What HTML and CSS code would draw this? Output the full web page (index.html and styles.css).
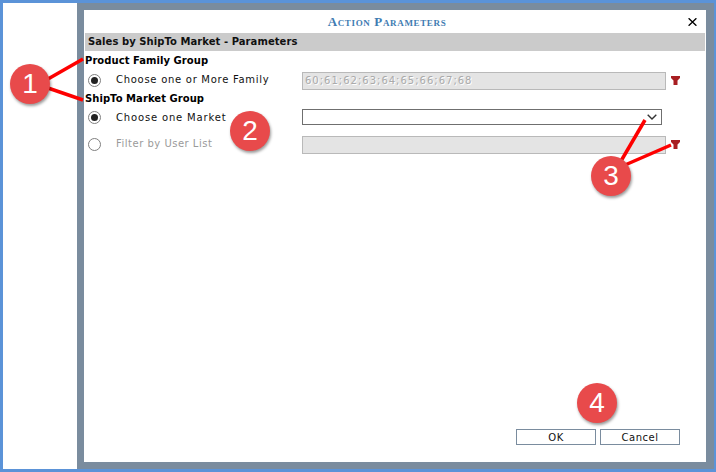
FILE: index.html
```html
<!DOCTYPE html>
<html lang="en">
<head>
    <meta charset="UTF-8" />
    <title>Action Parameters</title>
    <link rel="stylesheet" href="styles.css">
</head>
<body>
    <div class="frame">
        <div class="side"></div>
        <div class="backdrop">
            <div class="dialog">
                <div class="dialog-title">
                    <span class="title-text">Action Parameters</span>
                    <svg class="close" viewBox="0 0 9 8"><path d="M0.6 0.3L8.4 7.7M8.4 0.3L0.6 7.7" fill="none" stroke="#000" stroke-width="1.4"/></svg>
                </div>
                <div class="section-bar">Sales by ShipTo Market - Parameters</div>

                <div class="group-label">Product Family Group</div>
                <div class="row row-first">
                    <span class="radio checked"></span>
                    <span class="row-label">Choose one or More Family</span>
                    <div class="field disabled">60;61;62;63;64;65;66;67;68</div>
                    <svg class="filter" viewBox="0 0 9 9"><path d="M0 0H9V2L6.5 4.4V9H2.5V4.4L0 2Z" fill="#a81e22"/></svg>
                </div>

                <div class="group-label">ShipTo Market Group</div>
                <div class="row row-select">
                    <span class="radio checked"></span>
                    <span class="row-label market">Choose one Market</span>
                    <div class="select">
                        <svg class="chevron" viewBox="0 0 10 6"><path d="M0.7 0.7L5 5L9.3 0.7" fill="none" stroke="#333" stroke-width="1.4"/></svg>
                    </div>
                </div>
                <div class="row row-list">
                    <span class="radio off"></span>
                    <span class="row-label muted">Filter by User List</span>
                    <div class="field disabled"></div>
                    <svg class="filter" viewBox="0 0 9 9"><path d="M0 0H9V2L6.5 4.4V9H2.5V4.4L0 2Z" fill="#a81e22"/></svg>
                </div>

                <div class="buttons">
                    <button class="btn">OK</button>
                    <button class="btn">Cancel</button>
                </div>
            </div>
        </div>
    </div>

    <!-- callouts drawn over the screenshot -->
    <svg class="callout-lines" viewBox="0 0 716 472">
        <g stroke="#fe0000" stroke-width="3.5">
            <line x1="48" y1="79" x2="83" y2="59"/>
            <line x1="48" y1="88" x2="83" y2="100"/>
            <line x1="621" y1="161" x2="645" y2="120"/>
            <line x1="625" y1="165" x2="671" y2="145"/>
        </g>
    </svg>
    <span class="callout c1">1</span>
    <span class="callout c2">2</span>
    <span class="callout c3">3</span>
    <span class="callout c4">4</span>
</body>
</html>
```

FILE: styles.css
```css
html, body {
    height: 100%;
    margin: 0;
    padding: 0;
    overflow: hidden;
}

body {
    position: relative;
    font-family: "DejaVu Sans", Verdana, sans-serif;
    font-size: 10px;
    color: #111;
    background: #fff;
}

.frame {
    box-sizing: border-box;
    width: 716px;
    height: 472px;
    display: flex;
    border: solid #5b93d8;
    border-width: 3px 2px 3px 3px;
}

.side {
    width: 74px;
    background: #fff;
}

.backdrop {
    flex: 1;
    display: flex;
    padding: 7px 8px 7px 7px;
    background: #7a8c9e;
}

.dialog {
    flex: 1;
    background: #fff;
    display: flex;
    flex-direction: column;
}

.dialog-title {
    height: 23px;
    padding-right: 16px;
    display: flex;
    align-items: center;
    justify-content: center;
    position: relative;
}

.title-text {
    font-family: "Liberation Serif", serif;
    font-size: 13px;
    font-weight: bold;
    font-variant: small-caps;
    letter-spacing: 0.65px;
    color: #3f7cb2;
    padding-top: 1px;
}

.close {
    position: absolute;
    right: 9px;
    top: 8px;
    width: 9px;
    height: 8px;
}

.section-bar {
    height: 18px;
    line-height: 18px;
    margin: 0 1px 3px;
    padding-left: 3px;
    background: #cbcbcb;
    font-weight: bold;
    letter-spacing: 0.06px;
}

.group-label {
    height: 14px;
    line-height: 14px;
    padding-left: 1px;
    font-weight: bold;
    letter-spacing: 0.05px;
    color: #000;
}

.row {
    display: flex;
    align-items: center;
    padding-left: 4px;
}

.row-first { height: 18px; margin: 4px 0 2px; }
.row-select { height: 16px; margin: 3px 0 11px; }
.row-list { height: 18px; }

.radio {
    box-sizing: border-box;
    width: 13px;
    height: 13px;
    border-radius: 50%;
    border: 1px solid #808080;
    display: flex;
    align-items: center;
    justify-content: center;
    background: #fff;
}

.radio.checked::after {
    content: "";
    width: 7px;
    height: 7px;
    border-radius: 50%;
    background: #222;
}

.row-first .radio,
.row-list .radio {
    margin-bottom: 2px;
}

.row-label {
    width: 186px;
    margin-left: 15px;
    letter-spacing: 0.72px;
}

.row-first .row-label,
.row-list .row-label {
    padding-bottom: 4px;
}

.market {
    letter-spacing: 0.84px;
}

.muted {
    color: #9a9a9a;
    letter-spacing: 0.5px;
}

.field {
    box-sizing: border-box;
    width: 364px;
    height: 18px;
    line-height: 16px;
    padding-left: 2px;
    font-size: 10px;
    letter-spacing: 1px;
    border: 1px solid #b9b9b9;
    background: #e4e4e4;
    color: #aaa;
    text-shadow: 1px 1px 0 #fff;
}

.select {
    box-sizing: border-box;
    width: 360px;
    height: 16px;
    border: 1px solid #6f6f6f;
    background: #fff;
    display: flex;
    align-items: center;
    justify-content: flex-end;
    padding-right: 4px;
}

.chevron {
    width: 10px;
    height: 6px;
}

.filter {
    width: 9px;
    height: 9px;
    margin-left: 5px;
    margin-bottom: 1px;
}

.buttons {
    margin-top: auto;
    margin-bottom: 17px;
    margin-right: 26px;
    display: flex;
    justify-content: flex-end;
    gap: 4px;
}

.btn {
    box-sizing: border-box;
    width: 80px;
    height: 16px;
    padding: 1px 0 0;
    font-family: inherit;
    font-size: 10px;
    line-height: 14px;
    letter-spacing: 0.5px;
    color: #111;
    background: #fff;
    border: 1px solid #7a8c9e;
    border-radius: 0;
}

.callout-lines {
    position: absolute;
    left: 0;
    top: 0;
    width: 716px;
    height: 472px;
}

.callout {
    position: absolute;
    width: 40px;
    height: 40px;
    border-radius: 50%;
    background: #e84a4b;
    box-shadow: 1px 2px 3px rgba(0, 0, 0, 0.4);
    color: #fff;
    font-family: "Liberation Sans", Arial, sans-serif;
    font-size: 28px;
    line-height: 40px;
    text-align: center;
}

.c1 { left: 10px; top: 64px; }
.c2 { left: 230px; top: 111px; }
.c3 { left: 591px; top: 156px; }
.c4 { left: 577px; top: 383px; }
```
